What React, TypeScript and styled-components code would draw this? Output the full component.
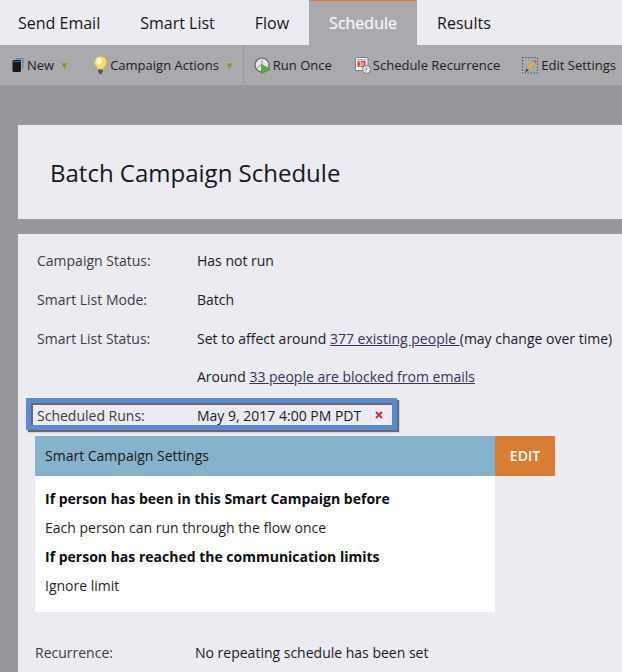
import React from "react";
import styled, { createGlobalStyle } from "styled-components";

const Global = createGlobalStyle`
  html, body { margin: 0; padding: 0; background: #98979b; }
  body { font-family: "Open Sans", "Liberation Sans", sans-serif; color: #1a1a1e; }
`;

const Page = styled.div`
  width: 622px;
  height: 672px;
  overflow: hidden;
  display: flex;
  flex-direction: column;
  background: #98979b;
`;

const TabBar = styled.div`
  display: flex;
  height: 45px;
  background: #ecebf2;
`;

const Tab = styled.div<{ $active?: boolean; $first?: boolean }>`
  height: 45px;
  box-sizing: border-box;
  padding: 0 20px 0 ${(p) => (p.$first ? 18 : 20)}px;
  display: flex;
  align-items: center;
  font-size: 16px;
  color: ${(p) => (p.$active ? "#f4f4f6" : "#16161a")};
  background: ${(p) => (p.$active ? "#aaa9ad" : "transparent")};
  border-top: ${(p) => (p.$active ? "1px solid #e07b30" : "none")};
  width: ${(p) => (p.$active ? "108px" : "auto")};
  text-shadow: ${(p) => (p.$active ? "0 0 1px rgba(255,255,255,0.7)" : "none")};
`;

const Toolbar = styled.div`
  height: 40px;
  display: flex;
  align-items: center;
  background: #aaa9ad;
  font-size: 13px;
  color: #1d1d22;
  white-space: nowrap;
`;

const ToolItem = styled.div<{ $left: number; $gap?: number }>`
  display: flex;
  align-items: center;
  margin-left: ${(p) => p.$left}px;
  gap: ${(p) => p.$gap ?? 3}px;
`;

const Separator = styled.div`
  width: 1px;
  height: 40px;
  background: #98979b;
  margin-left: 10px;
`;

const Panel = styled.div`
  margin-left: 18px;
  background: #ecebf2;
`;

const TitlePanel = styled(Panel)`
  margin-top: 40px;
  height: 95px;
  display: flex;
  align-items: center;
  padding-left: 32px;
  font-size: 24px;
  color: #17171b;
`;

const ContentPanel = styled(Panel)`
  margin-top: 15px;
  flex: 1;
  padding-top: 7px;
  font-size: 14px;
  display: flex;
  flex-direction: column;
`;

const Row = styled.div<{ $lift?: boolean }>`
  display: flex;
  height: 39px;
  box-sizing: border-box;
  padding-bottom: ${(p) => (p.$lift ? 2 : 0)}px;
  align-items: center;
  padding-left: 19px;
  white-space: nowrap;
`;

const Label = styled.div`
  width: 160px;
  flex: none;
  color: #3c3c42;
`;

const Value = styled.div`
  color: #1a1a1e;
`;

const TextLink = styled.a`
  color: #34345a;
  text-decoration: underline;
`;

const Highlight = styled.div`
  margin: 1px 0 0 8px;
  width: 371px;
  height: 32px;
  box-sizing: border-box;
  border: 5px solid #5b8ad0;
  box-shadow: 2px 2px 1px rgba(70, 70, 78, 0.8), inset 2px 2px 0 #68676c;
  display: flex;
  align-items: center;
  padding: 2px 0 0 6px;
  white-space: nowrap;
  flex: none;
`;

const RemoveIcon = styled.svg`
  margin-left: 14px;
  flex: none;
`;

const SettingsHeader = styled.div`
  margin: 6px 0 0 17px;
  display: flex;
  height: 40px;
  flex: none;
`;

const SettingsTitle = styled.div`
  width: 460px;
  box-sizing: border-box;
  padding: 0 0 2px 10px;
  display: flex;
  align-items: center;
  background: #86b3cb;
  color: #17171b;
`;

const EditButton = styled.div`
  width: 60px;
  box-sizing: border-box;
  padding-bottom: 2px;
  display: flex;
  align-items: center;
  justify-content: center;
  background: #d97d35;
  color: #fff;
  font-weight: 600;
`;

const SettingsBody = styled.div`
  margin-left: 17px;
  width: 460px;
  height: 136px;
  box-sizing: border-box;
  flex: none;
  padding: 8px 10px 0;
  background: #fff;
`;

const SettingLine = styled.div<{ $strong?: boolean }>`
  height: 29px;
  line-height: 29px;
  font-weight: ${(p) => (p.$strong ? 700 : 400)};
  color: ${(p) => (p.$strong ? "#0c0c10" : "#1f1f24")};
  white-space: nowrap;
`;

const RecurrenceRow = styled(Row)`
  margin-top: 21px;
  padding-left: 17px;
`;

const ArrowSvg = styled.svg`
  margin-left: 4px;
  flex: none;
`;

const DropArrow = () => (
  <ArrowSvg width="7" height="7" viewBox="0 0 7 7">
    <path d="M0 0.3h7L3.5 6.9z" fill="#6f9d3c" />
    <path d="M0 0.3h7l-.5 1h-6z" fill="#b4c99a" />
  </ArrowSvg>
);

const BookIcon = () => (
  <svg width="12" height="16" viewBox="0 0 12 16">
    <path d="M4 1h7.5v10.5H10V2.4H4z" fill="#4a90c8" />
    <rect x="0.5" y="3" width="8.5" height="12" rx="1.5" fill="#17171a" />
    <rect x="1.5" y="4.2" width="6.5" height="1" fill="#66666b" />
  </svg>
);

const BulbIcon = () => (
  <svg width="13" height="18" viewBox="0 0 13 18">
    <path d="M6.5 0.5a6 6 0 0 1 3.6 10.8c-.7.6-1 1.2-1 2H3.9c0-.8-.3-1.4-1-2A6 6 0 0 1 6.5.5z" fill="#f2df70" stroke="#d6c050" strokeWidth=".6" />
    <ellipse cx="5" cy="5" rx="2.6" ry="3.2" fill="#fdf8c8" />
    <rect x="4" y="13.5" width="5" height="3" rx="1" fill="#55555a" />
    <rect x="5" y="16.5" width="3" height="1.2" fill="#333" />
  </svg>
);

const RunIcon = () => (
  <svg width="17" height="17" viewBox="0 0 17 17">
    <circle cx="8" cy="8" r="7" fill="#e4e4e6" stroke="#5f5f66" strokeWidth="1.2" />
    <path d="M8 8V2.5M8 8L3.5 10" stroke="#98989e" strokeWidth="1" fill="none" />
    <path d="M7.5 7.5l8.8 4.8-8.8 4.4z" fill="#5aac36" stroke="#3b7c2c" strokeWidth=".5" />
  </svg>
);

const CalendarIcon = () => (
  <svg width="16" height="17" viewBox="0 0 16 17">
    <rect x="0.5" y="0.5" width="12.5" height="13" rx="1" fill="#f1eff2" stroke="#7d7d86" />
    <rect x="2" y="2" width="9.5" height="1.4" fill="#b3b3ba" />
    <rect x="2.5" y="4" width="8" height="6" fill="#d0453c" />
    <path d="M4 5h2v4H4M8 5v4" stroke="#fff" strokeWidth=".9" fill="none" />
    <circle cx="11.5" cy="12.5" r="4" fill="#e3e6ec" stroke="#707a8c" />
    <path d="M11.5 10.2v2.3l-2 1" stroke="#66666c" strokeWidth=".8" fill="none" />
  </svg>
);

const PencilIcon = () => (
  <svg width="16" height="17" viewBox="0 0 16 17">
    <rect x="0.5" y="0.5" width="15" height="15.5" fill="none" stroke="#2b5b96" strokeDasharray="1.5 1.5" />
    <path d="M5 10.5l6.5-6.5 2 2-6.5 6.5-3.2 1.8z" fill="#e6b94a" stroke="#9c7a2c" strokeWidth=".5" />
    <path d="M11.5 4l2 2 1.2-1.2-2-2z" fill="#c8584a" />
    <path d="M3.3 15l1.3-3.4 2 2z" fill="#3c3a30" />
  </svg>
);

export default function App() {
  return (
    <Page>
      <Global />
      <TabBar>
        <Tab $first>Send Email</Tab>
        <Tab>Smart List</Tab>
        <Tab>Flow</Tab>
        <Tab $active>Schedule</Tab>
        <Tab>Results</Tab>
      </TabBar>
      <Toolbar>
        <ToolItem $left={12}><BookIcon />New<DropArrow /></ToolItem>
        <ToolItem $left={26}><BulbIcon />Campaign Actions<DropArrow /></ToolItem>
        <Separator />
        <ToolItem $left={10} $gap={2}><RunIcon />Run Once</ToolItem>
        <ToolItem $left={23} $gap={2}><CalendarIcon />Schedule Recurrence</ToolItem>
        <ToolItem $left={22}><PencilIcon />Edit Settings</ToolItem>
      </Toolbar>
      <TitlePanel>Batch Campaign Schedule</TitlePanel>
      <ContentPanel>
        <Row><Label>Campaign Status:</Label><Value>Has not run</Value></Row>
        <Row><Label>Smart List Mode:</Label><Value>Batch</Value></Row>
        <Row>
          <Label>Smart List Status:</Label>
          <Value>Set to affect around <TextLink>377 existing people </TextLink>(may change over time)</Value>
        </Row>
        <Row $lift>
          <Label />
          <Value>Around <TextLink>33 people are blocked from emails</TextLink></Value>
        </Row>
        <Highlight>
          <Label>Scheduled Runs:</Label>
          <Value>May 9, 2017 4:00 PM PDT</Value>
          <RemoveIcon width="8" height="8" viewBox="0 0 8 8">
            <path d="M1 1l6 6M7 1L1 7" stroke="#c2353f" strokeWidth="2" />
          </RemoveIcon>
        </Highlight>
        <SettingsHeader>
          <SettingsTitle>Smart Campaign Settings</SettingsTitle>
          <EditButton>EDIT</EditButton>
        </SettingsHeader>
        <SettingsBody>
          <SettingLine $strong>If person has been in this Smart Campaign before</SettingLine>
          <SettingLine>Each person can run through the flow once</SettingLine>
          <SettingLine $strong>If person has reached the communication limits</SettingLine>
          <SettingLine>Ignore limit</SettingLine>
        </SettingsBody>
        <RecurrenceRow>
          <Label>Recurrence:</Label>
          <Value>No repeating schedule has been set</Value>
        </RecurrenceRow>
      </ContentPanel>
    </Page>
  );
}
